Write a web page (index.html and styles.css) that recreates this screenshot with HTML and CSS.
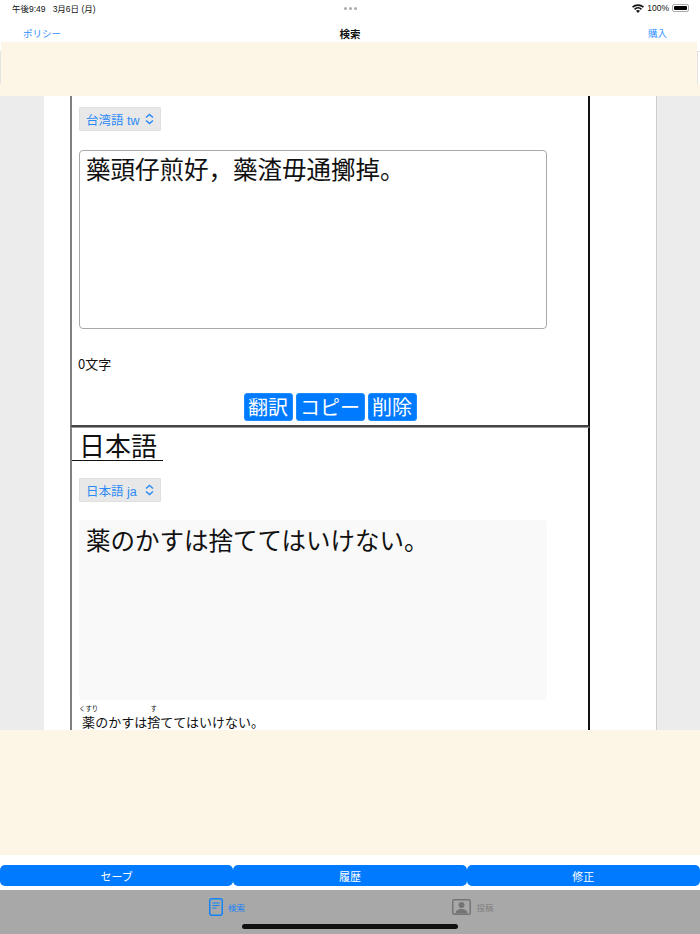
FILE: index.html
```html
<!DOCTYPE html>
<html lang="ja">
<head>
    <meta charset="UTF-8">
    <meta name="viewport" content="width=device-width, initial-scale=1.0">
    <title>検索</title>
    <link rel="stylesheet" href="styles.css">
</head>
<body>
    <div class="status-bar">
        <span class="status-time">午後9:49&nbsp;&nbsp;&nbsp;3月6日 (月)</span>
        <span class="status-dots"><i></i><i></i><i></i></span>
        <span class="status-right">
            <svg class="wifi" width="12" height="9" viewBox="0 0 12 9"><path d="M6 9 4 6.8a3 3 0 0 1 4 0zM3.1 5.9 2 4.7a5.8 5.8 0 0 1 8 0L8.900 5.900a4.200 4.200 0 0 0-5.800 0zM1.100 3.800 0 2.600a8.700 8.700 0 0 1 12 0l-1.100 1.200a7.200 7.200 0 0 0-9.800 0z" fill="#111"/></svg>
            <span>100%</span>
            <span class="battery"><span class="battery-fill"></span></span>
        </span>
    </div>
    <div class="nav-bar">
        <a class="nav-link">ポリシー</a>
        <span class="nav-title">検索</span>
        <a class="nav-link nav-link-right">購入</a>
    </div>
    <div class="ad-top">
        <div class="ad-top-row">
            <div class="ad-edge"><div class="ad-edge-box"></div></div>
            <div class="ad-fill"></div>
            <div class="ad-edge ad-edge-right"><div class="ad-edge-box"></div></div>
        </div>
        <div class="ad-fill ad-top-foot"></div>
    </div>

    <div class="content">
        <div class="sheet">
            <div class="panel panel-first">
                <div class="select">
                    <span>台湾語 tw</span>
                    <svg class="chevrons" width="9" height="12" viewBox="0 0 9 12"><path d="M1 4.500 4.500 1.500 8 4.500M1 7.500l3.500 3 3.500-3" fill="none" stroke="#2b8af7" stroke-width="1.500"/></svg>
                </div>
                <textarea class="text-box">藥頭仔煎好，藥渣毋通擲掉。</textarea>
                <div class="count">0文字</div>
                <div class="actions">
                    <button class="action">翻訳</button>
                    <button class="action">コピー</button>
                    <button class="action">削除</button>
                </div>
            </div>
            <div class="panel panel-second">
                <div class="lang-title">日本語</div>
                <div class="select select-ja">
                    <span>日本語 ja</span>
                    <svg class="chevrons" width="9" height="12" viewBox="0 0 9 12"><path d="M1 4.500 4.500 1.500 8 4.500M1 7.500l3.500 3 3.500-3" fill="none" stroke="#2b8af7" stroke-width="1.500"/></svg>
                </div>
                <div class="result-box">薬のかすは捨ててはいけない。</div>
                <div class="reading"><ruby>薬<rt>くすり</rt></ruby>のかすは<ruby>捨<rt>す</rt></ruby>ててはいけない。</div>
            </div>
        </div>
    </div>

    <div class="ad-bottom"></div>
    <div class="tools">
        <button class="tool">セーブ</button>
        <button class="tool">履歴</button>
        <button class="tool">修正</button>
    </div>
    <div class="tab-bar">
        <div class="tab tab-active">
            <svg width="14" height="18" viewBox="0 0 14 18"><rect x="0.750" y="0.750" width="12.500" height="16.500" rx="2" fill="none" stroke="#1583f5" stroke-width="1.500"/><path d="M3.500 5h7M3.500 7.500h7M3.500 10h4" stroke="#1583f5" stroke-width="1.200"/></svg>
            <span>検索</span>
        </div>
        <div class="tab">
            <svg width="19" height="16" viewBox="0 0 19 16"><rect x="0.750" y="0.750" width="17.500" height="14.500" rx="1.500" fill="none" stroke="#757575" stroke-width="1.500"/><circle cx="9.500" cy="6" r="3" fill="#757575"/><path d="M3.500 14.500c0-3 2.500-4.500 6-4.500s6 1.500 6 4.500z" fill="#757575"/></svg>
            <span>投稿</span>
        </div>
        <div class="home-indicator"></div>
    </div>
</body>
</html>
```

FILE: styles.css
```css
* {
    box-sizing: border-box;
}

body {
    margin: 0;
    width: 700px;
    height: 934px;
    overflow: hidden;
    display: flex;
    flex-direction: column;
    background: white;
    color: #111;
    font-family: "Noto Sans CJK JP", "Liberation Sans", sans-serif;
}

.status-bar {
    height: 24px;
    padding: 0 11px 8px 12px;
    display: grid;
    grid-template-columns: 1fr auto 1fr;
    align-items: center;
    font-size: 8.500px;
    font-family: "Liberation Sans", "Noto Sans CJK JP", sans-serif;
}

.status-dots {
    display: flex;
    gap: 2px;
}

.status-dots i {
    width: 3px;
    height: 3px;
    border-radius: 50%;
    background: #aaa;
}

.status-right {
    display: flex;
    align-items: center;
    justify-content: flex-end;
    gap: 3px;
}

.battery {
    width: 17px;
    height: 8px;
    padding: 1px;
    border: 1px solid #aaa;
    border-radius: 2px;
    display: flex;
}

.battery-fill {
    flex: 1;
    background: black;
    border-radius: 1px;
}

.nav-bar {
    height: 18px;
    padding: 0 33px 0 23px;
    display: grid;
    grid-template-columns: 1fr auto 1fr;
    align-items: center;
    font-size: 9.500px;
}

.nav-link {
    color: #2f8fff;
}

.nav-link-right {
    text-align: right;
}

.nav-title {
    margin-left: 10px;
    font-weight: 700;
    font-size: 10.500px;
}

.ad-top {
    height: 54px;
    display: flex;
    flex-direction: column;
}

.ad-top-row {
    height: 42px;
    display: flex;
}

.ad-fill {
    flex: 1;
    background: #fdf5e6;
}

.ad-top-foot {
    flex: none;
    height: 12px;
}

.ad-edge {
    width: 1px;
    padding-top: 9px;
}

.ad-edge-right {
    width: 3px;
}

.ad-edge-box {
    height: 34px;
    border: 1px solid #e4e4e4;
    border-right: none;
}

.content {
    height: 634px;
    padding-left: 44px;
    background: #ececec;
    overflow: hidden;
}

.sheet {
    width: 613px;
    height: 100%;
    padding-left: 26px;
    background: white;
    border-right: 1px solid #ccc;
}

.panel {
    width: 520px;
    padding-left: 7px;
    border-left: 2px solid #808080;
    border-right: 2px solid #111;
}

.panel-first {
    height: 331px;
    padding-top: 11px;
    border-bottom: 2px solid #444;
}

.panel-second {
    height: 310px;
    padding-top: 2px;
    border-top: 1px solid #999;
}

.select {
    width: 82px;
    height: 24px;
    padding: 0 6px;
    display: flex;
    align-items: center;
    justify-content: space-between;
    background: #e8e8e8;
    border: 1px solid #e0e0e0;
    border-radius: 1px;
    color: #2b8af7;
    font-size: 12.500px;
    font-family: "Liberation Sans", "Noto Sans CJK JP", sans-serif;
}

.select-ja {
    margin-top: 17px;
}

.text-box {
    display: block;
    width: 468px;
    height: 179px;
    margin: 19px 0 0;
    padding: 3px 6px;
    border: 1px solid #a9a9a9;
    border-radius: 4px;
    background: white;
    color: #111;
    font-size: 24.500px;
    line-height: 30px;
    font-family: "Noto Sans CJK JP", sans-serif;
    resize: none;
}

.count {
    height: 20px;
    margin: 25px 0 0 -1px;
    font-size: 13px;
    line-height: 20px;
}

.actions {
    margin: 19px 0 0 -7px;
    display: flex;
    justify-content: center;
    gap: 3px;
}

.action {
    height: 28px;
    padding: 0 3.500px;
    background: #007aff;
    border: 1px solid #1a8cff;
    border-radius: 3px;
    color: white;
    font-size: 20px;
    line-height: 26px;
    font-family: "Noto Sans CJK JP", sans-serif;
}

.lang-title {
    width: 91px;
    height: 31px;
    margin-left: -7px;
    padding-left: 7px;
    border-bottom: 1.500px solid #111;
    font-size: 26px;
    line-height: 29px;
}

.result-box {
    width: 468px;
    height: 180px;
    margin-top: 18px;
    padding: 5px 7px;
    background: #f9f9f9;
    border-radius: 4px;
    font-size: 24.500px;
    line-height: 30px;
}

.reading {
    margin-top: 4px;
    font-size: 13px;
    line-height: 24px;
}

.reading rt {
    padding-bottom: 2px;
    font-size: 6.400px;
}

.ad-bottom {
    height: 125px;
    background: #fdf5e6;
}

.tools {
    height: 35px;
    padding: 10px 0 4px;
    display: grid;
    grid-template-columns: repeat(3, 1fr);
}

.tool {
    padding: 0;
    background: #007aff;
    border: none;
    border-radius: 5px;
    color: white;
    font-size: 11px;
    font-family: "Noto Sans CJK JP", sans-serif;
}

.tab-bar {
    position: relative;
    height: 44px;
    padding: 0 104px 11px;
    display: grid;
    grid-template-columns: 1fr 1fr;
    background: #a8a8a8;
}

.tab {
    display: flex;
    align-items: center;
    justify-content: center;
    gap: 5px;
    color: #7f7f7f;
    font-size: 8.500px;
}

.tab-active {
    color: #1583f5;
}

.home-indicator {
    position: absolute;
    left: 242px;
    bottom: 5px;
    width: 216px;
    height: 5px;
    border-radius: 3px;
    background: #111;
}
```
